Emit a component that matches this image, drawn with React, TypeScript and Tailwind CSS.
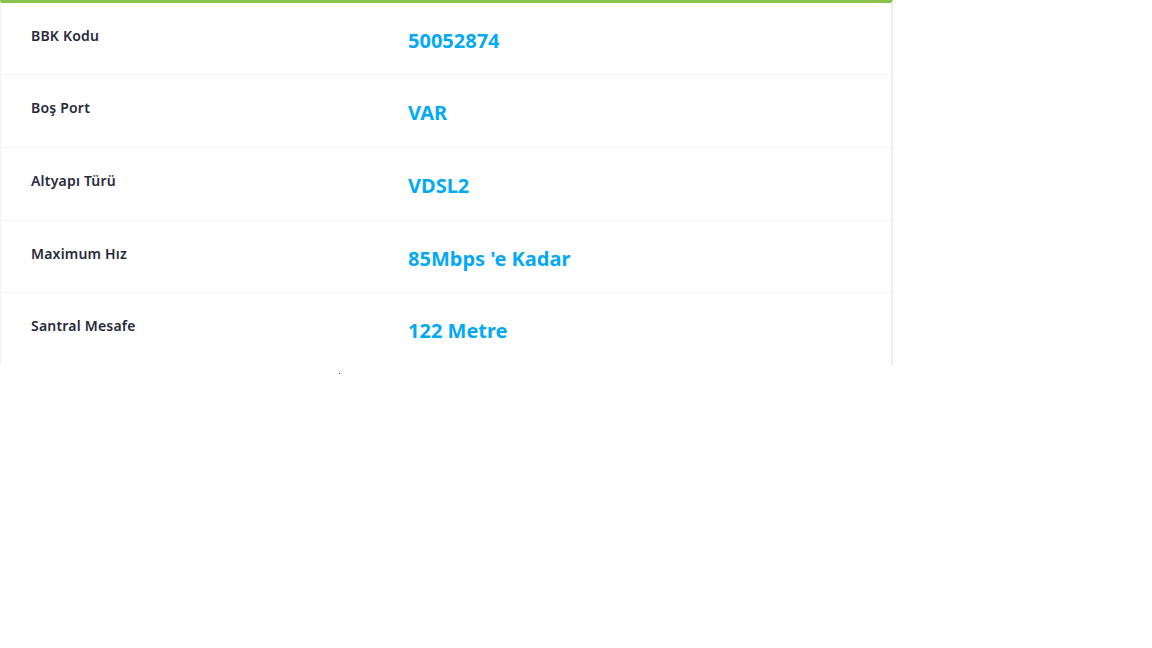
import React from "react";

const rows = [
  ["BBK Kodu", "50052874"],
  ["Boş Port", "VAR"],
  ["Altyapı Türü", "VDSL2"],
  ["Maximum Hız", "85Mbps 'e Kadar"],
  ["Santral Mesafe", "122 Metre"],
];

export default function App() {
  return (
    <div className="w-[1152px] h-[648px] bg-white relative" style={{ fontFamily: '"Noto Sans", "Open Sans", sans-serif' }}>
      <div className="w-[893px] h-[365px] overflow-hidden border-t-[3px] border-t-[#8bc34a] border-l border-l-[#f0f1f4] border-r-2 border-r-[#ebedf2] bg-white">
        {rows.map(([label, value], i) => (
          <div key={i} className={`flex border-b border-[#f0f1f4] ${i === 0 || i === 3 ? "h-[72px]" : "h-[73px]"}`}>
            <div className="w-[407px] shrink-0 pl-[30px] pt-[23px] text-[14px] leading-[20px] font-semibold text-[#282a3c] tracking-[0.2px]">{label}</div>
            <div className="pt-[25px] text-[20px] leading-[26px] font-bold text-[#03a9f4]">{value}</div>
          </div>
        ))}
      </div>
      <div className="absolute left-[339px] top-[373px] w-[1px] h-[1px] bg-[#333]" />
    </div>
  );
}
